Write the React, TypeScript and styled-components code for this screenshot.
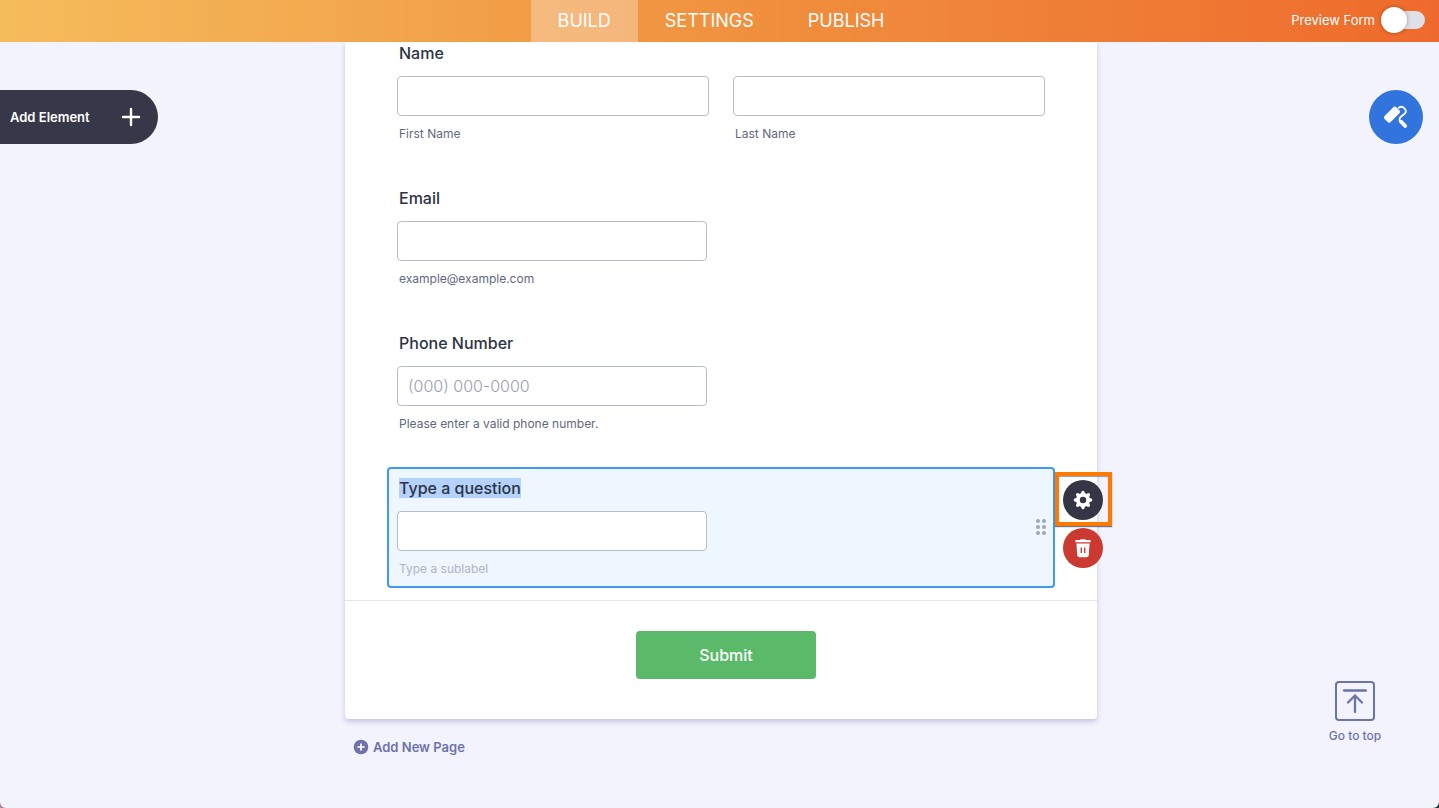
import React from "react";
import styled, { createGlobalStyle } from "styled-components";

const GlobalStyle = createGlobalStyle`
  *, *::before, *::after { box-sizing: border-box; }
  html { background: linear-gradient(90deg, #a08591, #24323f); }
  body { margin: 0; font-family: Inter, "Liberation Sans", sans-serif; color: #2c3345; }
  button, input { font: inherit; }
  button { border: 0; padding: 0; cursor: pointer; }
  a { text-decoration: none; }
`;

const Page = styled.div`
  position: relative;
  min-height: 100vh;
  background: #f3f3fe;
  border-radius: 0 0 6px 6px;
`;

const Header = styled.header`
  position: sticky;
  top: 0;
  z-index: 2;
  display: grid;
  grid-template-columns: 1fr auto 1fr;
  height: 42px;
  padding-left: 3px;
  background: linear-gradient(90deg, #f5bc5c, #f0923f 50%, #ee6a2c);
  color: #fff;
`;

const Nav = styled.nav`
  grid-column: 2;
  display: flex;
`;

const NavLink = styled.a<{ $active?: boolean }>`
  display: flex;
  align-items: center;
  padding: 0 27px 1px;
  font-size: 18px;
  line-height: 23px;
  color: #fff;
  background: ${(p) => (p.$active ? "rgba(255, 255, 255, 0.3)" : "transparent")};
`;

const Preview = styled.label`
  justify-self: end;
  display: flex;
  align-items: center;
  gap: 8px;
  padding: 0 14px 2px 0;
  font-size: 13px;
  line-height: 20px;
`;

const Toggle = styled.input`
  appearance: none;
  position: relative;
  width: 42px;
  height: 18px;
  margin: 0;
  border-radius: 9px;
  background: #e0e1e8;
  cursor: pointer;

  &::before {
    content: "";
    position: absolute;
    left: -2px;
    top: -4px;
    width: 26px;
    height: 26px;
    border-radius: 50%;
    background: #fff;
    box-shadow: 0 0 4px rgba(60, 30, 10, 0.4);
  }
`;

const AddElement = styled.button`
  position: absolute;
  left: 0;
  top: 90px;
  display: flex;
  align-items: center;
  justify-content: space-between;
  width: 158px;
  height: 54px;
  padding: 0 16px 0 10px;
  border-radius: 0 27px 27px 0;
  background: #363849;
  color: #fff;
  font-size: 13px;
  font-weight: 600;
`;

const Designer = styled.button`
  position: absolute;
  right: 16px;
  top: 90px;
  display: grid;
  place-items: center;
  width: 54px;
  height: 54px;
  border-radius: 50%;
  background: #3274de;
`;

const Main = styled.main`
  display: flex;
  flex-direction: column;
  width: 755px;
  max-width: 100%;
  margin: 0 auto;
  padding-left: 3px;
`;

const Card = styled.form`
  background: #fff;
  border-radius: 0 0 4px 4px;
  box-shadow: 0 3px 5px rgba(84, 95, 140, 0.28);
`;

const Questions = styled.div`
  display: flex;
  flex-direction: column;
  gap: 24px;
  padding: 0 42px 12px;
`;

const Question = styled.div<{ $selected?: boolean }>`
  position: relative;
  display: flex;
  align-items: center;
  justify-content: space-between;
  padding: 8px 6px 9px 8px;
  border: 2px solid ${(p) => (p.$selected ? "#4299f2" : "transparent")};
  border-radius: 4px;
  background: ${(p) => (p.$selected ? "#eef6ff" : "transparent")};

  &:first-child {
    padding-top: 0;
    border-top: 0;
  }
`;

const Fields = styled.div<{ $wide?: boolean }>`
  display: flex;
  gap: 24px;
  width: ${(p) => (p.$wide ? "648px" : "310px")};
`;

const Group = styled.div`
  min-width: 0;
`;

const Label = styled.label`
  display: block;
  padding: 0 2px;
  margin-bottom: 12px;
  font-size: 16px;
  font-weight: 500;
  line-height: 22px;
`;

const Selected = styled.mark`
  background: #b4d2fb;
  color: inherit;
`;

const Field = styled.div`
  flex: 1;
  min-width: 0;
`;

const TextInput = styled.input`
  display: block;
  width: 100%;
  height: 40px;
  padding: 0 10px;
  border: 1px solid #b8bdc9;
  border-radius: 4px;
  background: #fff;
  font-size: 16px;
  font-weight: 300;

  &::placeholder { color: #9a9faf; opacity: 1; }
`;

const Sublabel = styled.label<{ $faint?: boolean }>`
  display: block;
  padding: 0 2px;
  margin-top: 10px;
  font-size: 12px;
  line-height: 16px;
  color: ${(p) => (p.$faint ? "#b0b5c6" : "#5f6881")};
`;

const Handle = styled.button`
  display: grid;
  background: transparent;
`;

const Actions = styled.div`
  position: absolute;
  left: 100%;
  top: 11px;
  display: flex;
  flex-direction: column;
  gap: 8px;
  margin-left: 10px;
`;

const RoundButton = styled.button<{ $color: string }>`
  display: grid;
  place-items: center;
  width: 40px;
  height: 40px;
  border-radius: 50%;
  background: ${(p) => p.$color};
`;

const Callout = styled.div`
  position: relative;

  &::after {
    content: "";
    position: absolute;
    inset: -8px -9px -6px -8px;
    border: 4px solid #ff7a00;
    box-shadow: 0 1px 1px rgba(40, 60, 90, 0.7), inset 0 1px 1px rgba(40, 60, 90, 0.5);
    pointer-events: none;
  }
`;

const SubmitRow = styled.div`
  display: flex;
  justify-content: center;
  padding: 30px 0 40px 10px;
  border-top: 1px solid #e3e3f2;
`;

const Submit = styled.button`
  width: 180px;
  height: 48px;
  border-radius: 4px;
  background: #5aba69;
  color: #fff;
  font-size: 16px;
  font-weight: 500;
`;

const AddPage = styled.button`
  align-self: flex-start;
  display: flex;
  align-items: center;
  gap: 4px;
  margin: 18px 0 0 8px;
  background: transparent;
  color: #6c73a8;
  font-size: 13px;
  font-weight: 600;
  line-height: 20px;
`;

const GoTop = styled.a`
  position: absolute;
  right: 56px;
  bottom: 64px;
  display: flex;
  flex-direction: column;
  align-items: center;
  gap: 7px;
  width: 56px;
  color: #6c73a8;
  font-size: 12px;
  font-weight: 500;
  line-height: 16px;
  white-space: nowrap;
`;

const PlusIcon = () => (
  <svg width="22" height="22" viewBox="0 0 22 22" fill="none" stroke="#fff" strokeWidth="2.4" strokeLinecap="round">
    <path d="M11 3v16M3 11h16" />
  </svg>
);

const RollerIcon = () => (
  <svg width="24" height="24" viewBox="0 0 24 24" fill="none" stroke="#fff" strokeLinecap="round" strokeLinejoin="round">
    <path d="M2.6 12.4 10.8 4.2 13.4 6.8 5.2 15Z" fill="#fff" strokeWidth="5" />
    <path d="M14.8 2.7C16.8 1.2 18.6 1.6 20.2 3.2 22.4 5.6 22.4 7.2 20.6 8.8L16.8 11.8C15.5 12.9 15.3 13.8 15.6 15.8" strokeWidth="1.8" />
    <path d="M17 16.7 21.2 21" strokeWidth="3.8" />
  </svg>
);

const GearIcon = () => (
  <svg width="20" height="20" viewBox="0 0 20 20" fill="#fff">
    <circle cx="10" cy="10" r="7" />
    {[0, 45, 90, 135, 180, 225, 270, 315].map((angle) => (
      <path key={angle} d="M7.7 4 8.8 1.2Q10 .2 11.2 1.2L12.3 4Z" transform={`rotate(${angle} 10 10)`} />
    ))}
    <circle cx="10" cy="10" r="3.2" fill="#343646" />
  </svg>
);

const TrashIcon = () => (
  <svg width="20" height="20" viewBox="0 0 20 20" fill="#fff">
    <path d="M7.4 1.2h5.2v.9h4.2q.9 0 .9.9v1.3H2.3V3q0-.9.9-.9h4.2Z" />
    <path d="M3.4 5.5h13.2l-.9 11.8q-.2 2-2.2 2h-7q-2 0-2.2-2Z" />
    <path d="M8.3 9.6V15M11.7 9.6V15" stroke="#cb3930" strokeWidth="1.4" />
  </svg>
);

const DotsIcon = () => (
  <svg width="12" height="18" viewBox="0 0 12 18" fill="#a0a6b4">
    {[3, 9].map((x) => [3, 9, 15].map((y) => <circle key={`${x}-${y}`} cx={x} cy={y} r="2" />))}
  </svg>
);

const PageIcon = () => (
  <svg width="16" height="16" viewBox="0 0 16 16">
    <circle cx="8" cy="8" r="7.3" fill="#6c73a8" />
    <path d="M8 5v6M5 8h6" stroke="#fff" strokeWidth="1.7" strokeLinecap="round" />
  </svg>
);

const TopIcon = () => (
  <svg width="40" height="40" viewBox="0 0 40 40" fill="none" stroke="#6c73a8" strokeWidth="2" strokeLinecap="round" strokeLinejoin="round">
    <rect x="1" y="1" width="38" height="38" rx="3" />
    <path d="M9 9.5h22M20 31V14.5M13 21.5l7-7 7 7" strokeWidth="2.3" />
  </svg>
);

export default function App() {
  return (
    <>
      <GlobalStyle />
      <Page>
        <Header>
          <Nav>
            <NavLink href="#build" $active>BUILD</NavLink>
            <NavLink href="#settings">SETTINGS</NavLink>
            <NavLink href="#publish">PUBLISH</NavLink>
          </Nav>
          <Preview>
            Preview Form
            <Toggle type="checkbox" role="switch" />
          </Preview>
        </Header>

        <Main>
          <Card onSubmit={(e) => e.preventDefault()}>
            <Questions>
              <Question>
                <Group>
                  <Label htmlFor="first">Name</Label>
                  <Fields $wide>
                    <Field>
                      <TextInput id="first" />
                      <Sublabel htmlFor="first">First Name</Sublabel>
                    </Field>
                    <Field>
                      <TextInput id="last" />
                      <Sublabel htmlFor="last">Last Name</Sublabel>
                    </Field>
                  </Fields>
                </Group>
              </Question>
              <Question>
                <Group>
                  <Label htmlFor="email">Email</Label>
                  <Fields>
                    <Field>
                      <TextInput id="email" type="email" />
                      <Sublabel htmlFor="email">example@example.com</Sublabel>
                    </Field>
                  </Fields>
                </Group>
              </Question>
              <Question>
                <Group>
                  <Label htmlFor="phone">Phone Number</Label>
                  <Fields>
                    <Field>
                      <TextInput id="phone" type="tel" placeholder="(000) 000-0000" />
                      <Sublabel htmlFor="phone">Please enter a valid phone number.</Sublabel>
                    </Field>
                  </Fields>
                </Group>
              </Question>
              <Question $selected>
                <Group>
                  <Label htmlFor="question"><Selected>Type a question</Selected></Label>
                  <Fields>
                    <Field>
                      <TextInput id="question" />
                      <Sublabel htmlFor="question" $faint>Type a sublabel</Sublabel>
                    </Field>
                  </Fields>
                </Group>
                <Handle type="button" aria-label="Move"><DotsIcon /></Handle>
                <Actions>
                  <Callout>
                    <RoundButton type="button" $color="#343646" aria-label="Properties"><GearIcon /></RoundButton>
                  </Callout>
                  <RoundButton type="button" $color="#cb3930" aria-label="Delete"><TrashIcon /></RoundButton>
                </Actions>
              </Question>
            </Questions>
            <SubmitRow>
              <Submit type="submit">Submit</Submit>
            </SubmitRow>
          </Card>
          <AddPage type="button"><PageIcon />Add New Page</AddPage>
        </Main>

        <AddElement type="button">Add Element<PlusIcon /></AddElement>
        <Designer type="button" aria-label="Form designer"><RollerIcon /></Designer>
        <GoTop href="#top"><TopIcon />Go to top</GoTop>
      </Page>
    </>
  );
}
